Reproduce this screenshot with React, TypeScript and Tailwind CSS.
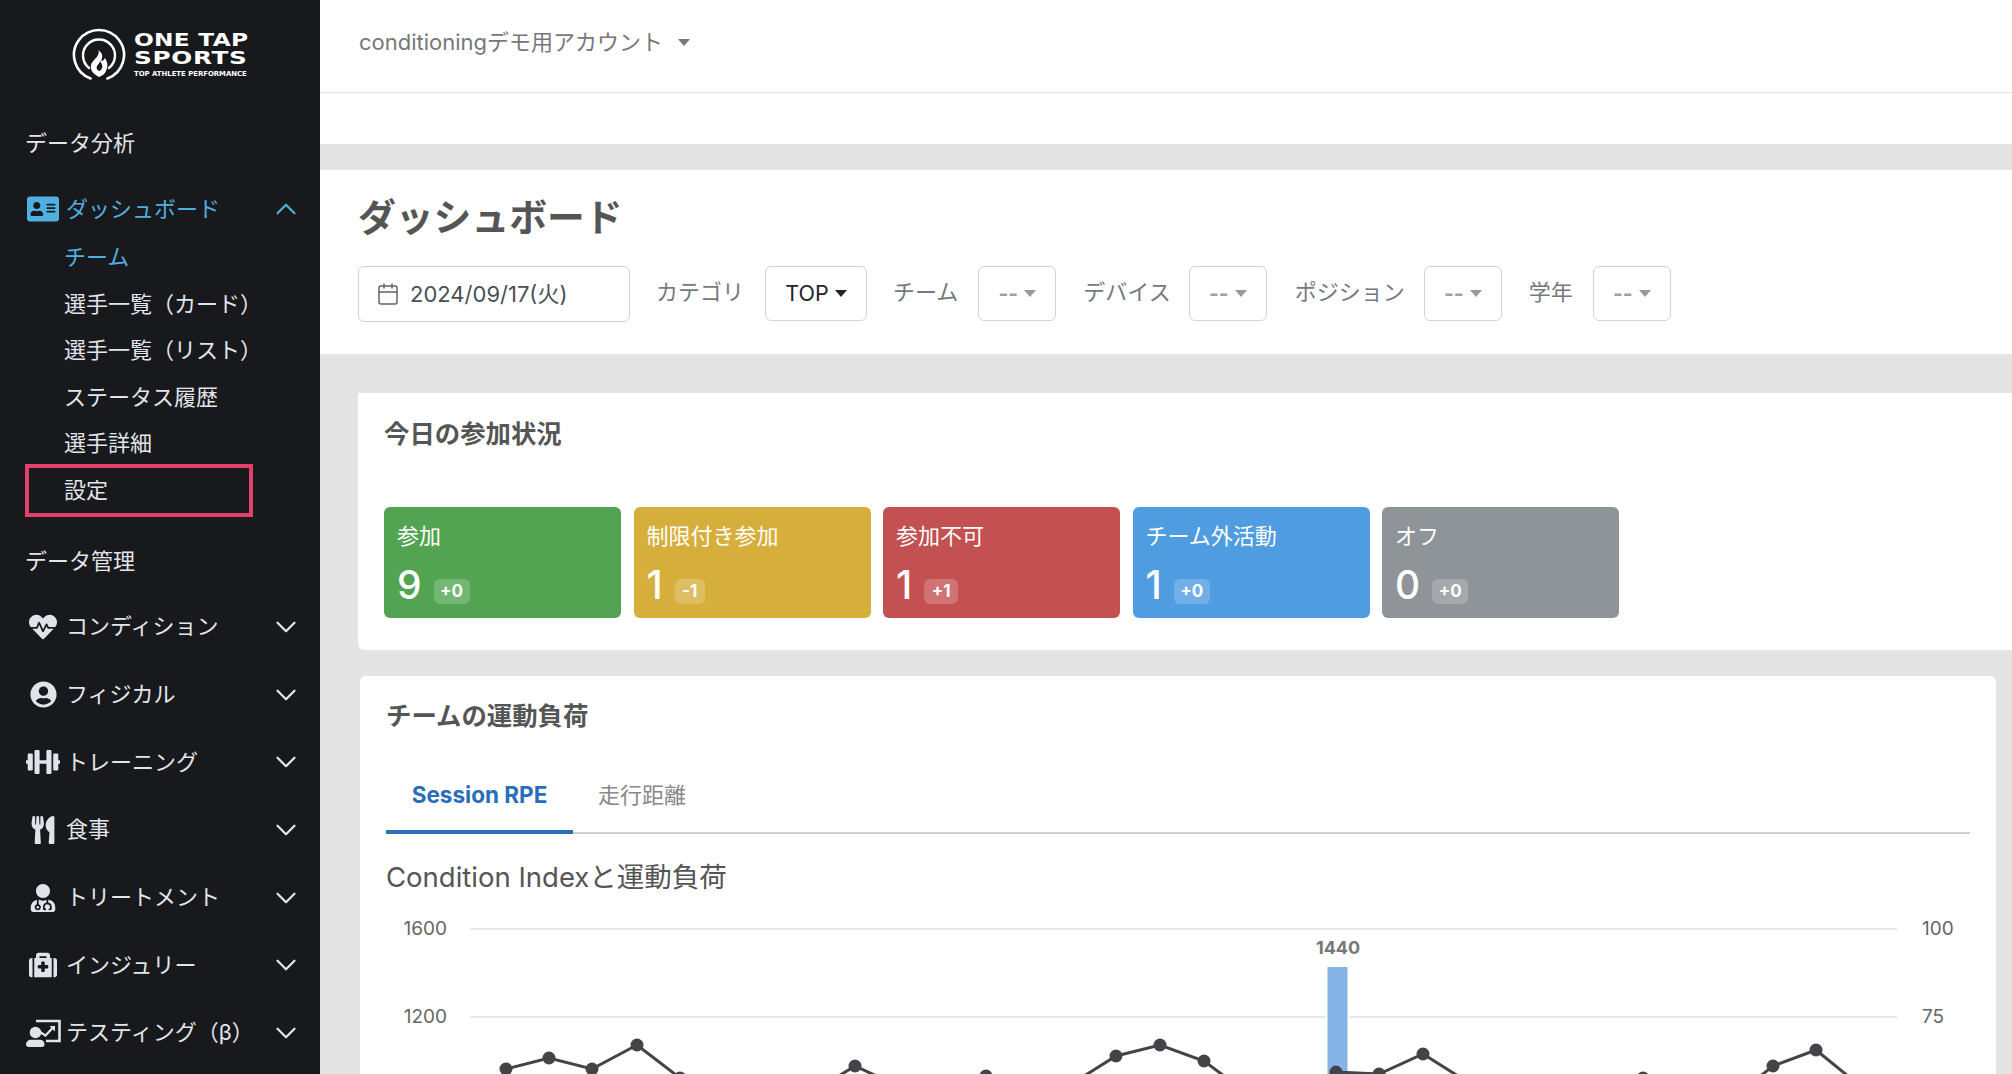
// App.tsx: ONE TAP SPORTS dashboard
import { Calendar, ChevronDown, ChevronUp } from 'lucide-react'
import { FaAddressCard, FaDumbbell, FaHeartbeat, FaMedkit, FaUserCircle, FaUserMd, FaUtensils } from 'react-icons/fa'

const subItems = ['選手一覧（カード）', '選手一覧（リスト）', 'ステータス履歴', '選手詳細']

// not in the icon packages: person in front of a board with a rising line
function TestingIcon() {
  return (
    <svg width="35" height="28" viewBox="0 0 35 28" fill="none">
      <circle cx="9.500" cy="13.500" r="5.800" fill="currentColor" />
      <path d="M0 25.500C0 22.500 2.500 20.800 5 20.800h9c2.500 0 4.500 1.700 4.500 4.700 0 1.500-1 2.500-2.500 2.500H2.500C1 28 0 27 0 25.500z" fill="currentColor" />
      <path d="M10 2h23.500v20H20" stroke="currentColor" strokeWidth="2.600" />
      <path d="M14 13l5.500 3.500L27 8.500" stroke="currentColor" strokeWidth="2.200" />
      <path d="M23.500 7H29v5.500z" fill="currentColor" />
    </svg>
  )
}

const groups = [
  { label: 'コンディション', icon: <FaHeartbeat className="size-[28px]" /> },
  { label: 'フィジカル', icon: <FaUserCircle className="size-[27px]" /> },
  { label: 'トレーニング', icon: <FaDumbbell className="size-[34px]" /> },
  { label: '食事', icon: <FaUtensils className="size-[28px]" /> },
  { label: 'トリートメント', icon: <FaUserMd className="size-[28px]" /> },
  { label: 'インジュリー', icon: <FaMedkit className="size-[28px]" /> },
  { label: 'テスティング（β）', icon: <TestingIcon /> }
]

const tiles = [
  { label: '参加', value: '9', diff: '+0', color: 'bg-[#52a452]', badge: 'w-[36px]' },
  { label: '制限付き参加', value: '1', diff: '-1', color: 'bg-[#d6ae3b]', badge: 'w-[30px]' },
  { label: '参加不可', value: '1', diff: '+1', color: 'bg-[#c35152]', badge: 'w-[34px]' },
  { label: 'チーム外活動', value: '1', diff: '+0', color: 'bg-[#4f9ce0]', badge: 'w-[36px]' },
  { label: 'オフ', value: '0', diff: '+0', color: 'bg-[#8f9499]', badge: 'w-[36px]' }
]

// chart runs, in page coordinates (the chart is cut by the bottom of the window)
const lineRuns = [
  [[506, 1068], [549, 1057], [592, 1068], [637, 1044], [680, 1077], [723, 1110]],
  [[768, 1120], [811, 1092], [855, 1065], [898, 1085], [942, 1110]],
  [[986, 1075], [1029, 1110]],
  [[1073, 1082], [1116, 1055], [1160, 1044], [1204, 1060], [1247, 1092]],
  [[1336, 1071], [1379, 1073], [1423, 1053], [1466, 1080], [1510, 1112]],
  [[1600, 1110], [1643, 1077], [1686, 1112]],
  [[1729, 1100], [1773, 1065], [1816, 1049], [1859, 1084], [1902, 1112]]
]

function Caret({ className }: { className: string }) {
  return <span className={`inline-block size-0 border-x-[6px] border-t-[7px] border-x-transparent ${className}`} />
}

function Logo() {
  return (
    <div className="flex h-[120px] items-start pt-[28px] pl-[71px]">
      <svg width="56" height="54" viewBox="0 0 56 54" fill="none" className="mr-[7px] shrink-0">
        <path d="M19.500 50.500A25 25 0 1 1 36.500 50.500" stroke="#fff" strokeWidth="2.600" strokeLinecap="round" />
        <path d="M18 40A16 16 0 1 1 38 40" stroke="#fff" strokeWidth="2.400" strokeLinecap="round" />
        <path
          d="M28 49c-6-3-9-7-8-12 1-4 5-6 7-10 1-2 1-4 0-5 5 3 5 7 3 11 2 0 3-1 4-3 3 5 3 9 1 13-1 3-4 5-7 6z"
          fill="#fff"
        />
        <path d="M28 43c-2-1-3-3-2-5 1-2 3-3 3-5 2 3 3 5 2 7-.5 1.500-1.500 2.500-3 3z" fill="#18191c" />
      </svg>
      <div className="flex flex-col pt-[3px] font-['DejaVu_Sans',sans-serif] font-bold text-white">
        <span className="origin-left scale-x-[1.33] text-[17.500px] leading-[18px] tracking-[0.2px] whitespace-nowrap">
          ONE TAP
        </span>
        <span className="origin-left scale-x-[1.41] text-[17.500px] leading-[18px] tracking-[0.5px]">SPORTS</span>
        <span className="mt-[3px] text-[6.900px] leading-[9px] whitespace-nowrap">TOP ATHLETE PERFORMANCE</span>
      </div>
    </div>
  )
}

function Sidebar() {
  return (
    <aside className="w-[320px] shrink-0 bg-[#18191c] text-[22px] text-[#e2e5ea]">
      <Logo />
      <div className="flex h-[46px] items-center pl-[25px]">データ分析</div>

      {/* open group */}
      <div className="mt-[20px] flex h-[46px] items-center pr-[17px] pl-[27px] text-[#4fb0e0]">
        <FaAddressCard className="size-[32px]" />
        <span className="ml-[7px] flex-1">ダッシュボード</span>
        <ChevronUp className="size-[34px]" strokeWidth={1.600} />
      </div>
      <div className="relative mt-[2.500px] pl-[64px]">
        <div className="flex h-[46.500px] items-center text-[#4fb0e0]">チーム</div>
        {subItems.map((item) => (
          <div key={item} className="flex h-[46.500px] items-center">
            {item}
          </div>
        ))}
        <div className="flex h-[46.500px] items-center">設定</div>
        {/* annotation drawn over the screenshot */}
        <div className="absolute top-[229.500px] left-[25px] h-[53px] w-[228px] border-4 border-[#e43e6c]" />
      </div>

      <div className="mt-[24.500px] flex h-[46px] items-center pl-[25px]">データ管理</div>
      <div className="mt-[9px]">
        {groups.map((g) => (
          <div key={g.label} className="flex h-[67.700px] items-center pr-[17px] pl-[25px]">
            <span className="flex w-[36px] shrink-0 justify-center text-[#dfe3ea]">{g.icon}</span>
            <span className="ml-[5px] flex-1 whitespace-nowrap">{g.label}</span>
            <ChevronDown className="size-[34px]" strokeWidth={1.600} />
          </div>
        ))}
      </div>
    </aside>
  )
}

function Select({ label, value, className }: { label: string; value: string; className: string }) {
  return (
    <>
      <span className={`mb-[4px] text-[22px] leading-none whitespace-nowrap text-[#74797e] ${className}`}>{label}</span>
      <div className="flex h-[55px] w-[78px] items-center justify-center gap-[6px] rounded-[6px] border border-[#ced4da] text-[21px] text-[#a0a0a0]">
        <span className="font-bold">{value}</span>
        <Caret className="border-t-[#9a9a9a]" />
      </div>
    </>
  )
}

function Filters() {
  return (
    <div className="mt-[24px] flex items-start pl-[38px]">
      <div className="flex h-[56px] w-[272px] items-center rounded-[6px] border border-[#ced4da] pl-[17px] text-[22px] text-[#495057]">
        <Calendar className="size-[24px] text-[#60666c]" strokeWidth={1.500} />
        <span className="ml-[10px]">2024/09/17(火)</span>
      </div>
      <div className="flex h-[55px] items-center">
        <span className="mr-[21px] ml-[26px] mb-[4px] text-[22px] leading-none text-[#74797e]">カテゴリ</span>
        <div className="flex h-[55px] w-[102px] items-center justify-center gap-[6px] rounded-[6px] border border-[#ced4da] text-[21.500px] text-[#212529]">
          TOP
          <Caret className="border-x-[5px] border-t-[6px] border-t-[#212529]" />
        </div>
        <Select label="チーム" value="--" className="mr-[20px] ml-[26px]" />
        <Select label="デバイス" value="--" className="mr-[18px] ml-[27px]" />
        <Select label="ポジション" value="--" className="mr-[19px] ml-[28px]" />
        <Select label="学年" value="--" className="mr-[20px] ml-[27px]" />
      </div>
    </div>
  )
}

function Chart() {
  return (
    <svg width="1585" height="200" viewBox="386 915 1585 200" className="mt-[20px] block" fontSize="19" fill="#666">
      <line x1="470" x2="1897" y1="928" y2="928" stroke="#e8e8e8" strokeWidth="2" />
      <line x1="470" x2="1897" y1="1016" y2="1016" stroke="#e8e8e8" strokeWidth="2" />
      <text x="447" y="934" textAnchor="end">1600</text>
      <text x="447" y="1022" textAnchor="end">1200</text>
      <text x="1922" y="934">100</text>
      <text x="1922" y="1022">75</text>
      <rect x="1326" y="965" width="23" height="150" fill="#fff" />
      <rect x="1327.500" y="966" width="20" height="150" fill="#86b4e8" />
      <text x="1338" y="953" textAnchor="middle" fontWeight="700" fontSize="18" fill="#777">1440</text>
      {lineRuns.map((run, i) => (
        <g key={i}>
          <polyline points={run.map((p) => p.join(',')).join(' ')} fill="none" stroke="#434348" strokeWidth="3" />
          {run.map((p) => (
            <circle key={p[0]} cx={p[0]} cy={p[1]} r="6.500" fill="#434348" />
          ))}
        </g>
      ))}
    </svg>
  )
}

export default function App() {
  return (
    <div className="flex h-[1074px] w-[2012px] overflow-hidden font-['Inter','Noto_Sans_CJK_JP',sans-serif]">
      <Sidebar />
      <main className="min-w-0 flex-1 bg-[#e4e4e4]">
        <div className="h-[144px] bg-white">
          <div className="flex h-[93px] items-center border-b border-[#e4e4e4] pb-[7px] pl-[39px] text-[22px] text-[#777]">
            conditioningデモ用アカウント
            <Caret className="ml-[15px] border-t-[#777]" />
          </div>
        </div>

        <section className="mt-[26px] h-[184px] bg-white pt-[22px]">
          <h1 className="pl-[38px] text-[37.800px] leading-[50px] font-bold text-[#555]">ダッシュボード</h1>
          <Filters />
        </section>

        <section className="mt-[39px] ml-[38px] h-[257px] rounded-bl-[6px] bg-white px-[26px] pt-[24px]">
          <h2 className="text-[25.400px] leading-[34px] font-bold text-[#555]">今日の参加状況</h2>
          <div className="mt-[56px] flex gap-[12.500px]">
            {tiles.map((t) => (
              <div key={t.label} className={`h-[111px] w-[237px] rounded-[6px] px-[13px] pt-[14px] text-white ${t.color}`}>
                <div className="text-[22px] leading-[30px]">{t.label}</div>
                <div className="mt-[12px] flex items-start">
                  <span className="text-[39px] leading-[44px] font-medium">{t.value}</span>
                  <span
                    className={`mt-[16px] ml-[12px] flex h-[25px] items-center justify-center rounded-[6px] bg-white/20 text-[17px] font-bold ${t.badge}`}
                  >
                    {t.diff}
                  </span>
                </div>
              </div>
            ))}
          </div>
        </section>

        <section className="mt-[26px] mr-[16px] ml-[40px] h-[420px] rounded-[6px] bg-white px-[26px] pt-[23px]">
          <h2 className="text-[25.400px] leading-[34px] font-bold text-[#555]">チームの運動負荷</h2>
          <div className="mt-[27px] flex h-[74px] border-b-2 border-[#d0d0d0] text-[22.500px]">
            <div className="-mb-[2px] flex w-[187px] items-center justify-center border-b-4 border-[#2a6ebb] font-bold text-[#2a6ebb]">
              Session RPE
            </div>
            <div className="ml-[25px] flex items-center pb-[2px] text-[22px] text-[#888]">走行距離</div>
          </div>
          <h3 className="mt-[24px] text-[27.500px] leading-[38px] text-[#555]">Condition Indexと運動負荷</h3>
          <Chart />
        </section>
      </main>
    </div>
  )
}
